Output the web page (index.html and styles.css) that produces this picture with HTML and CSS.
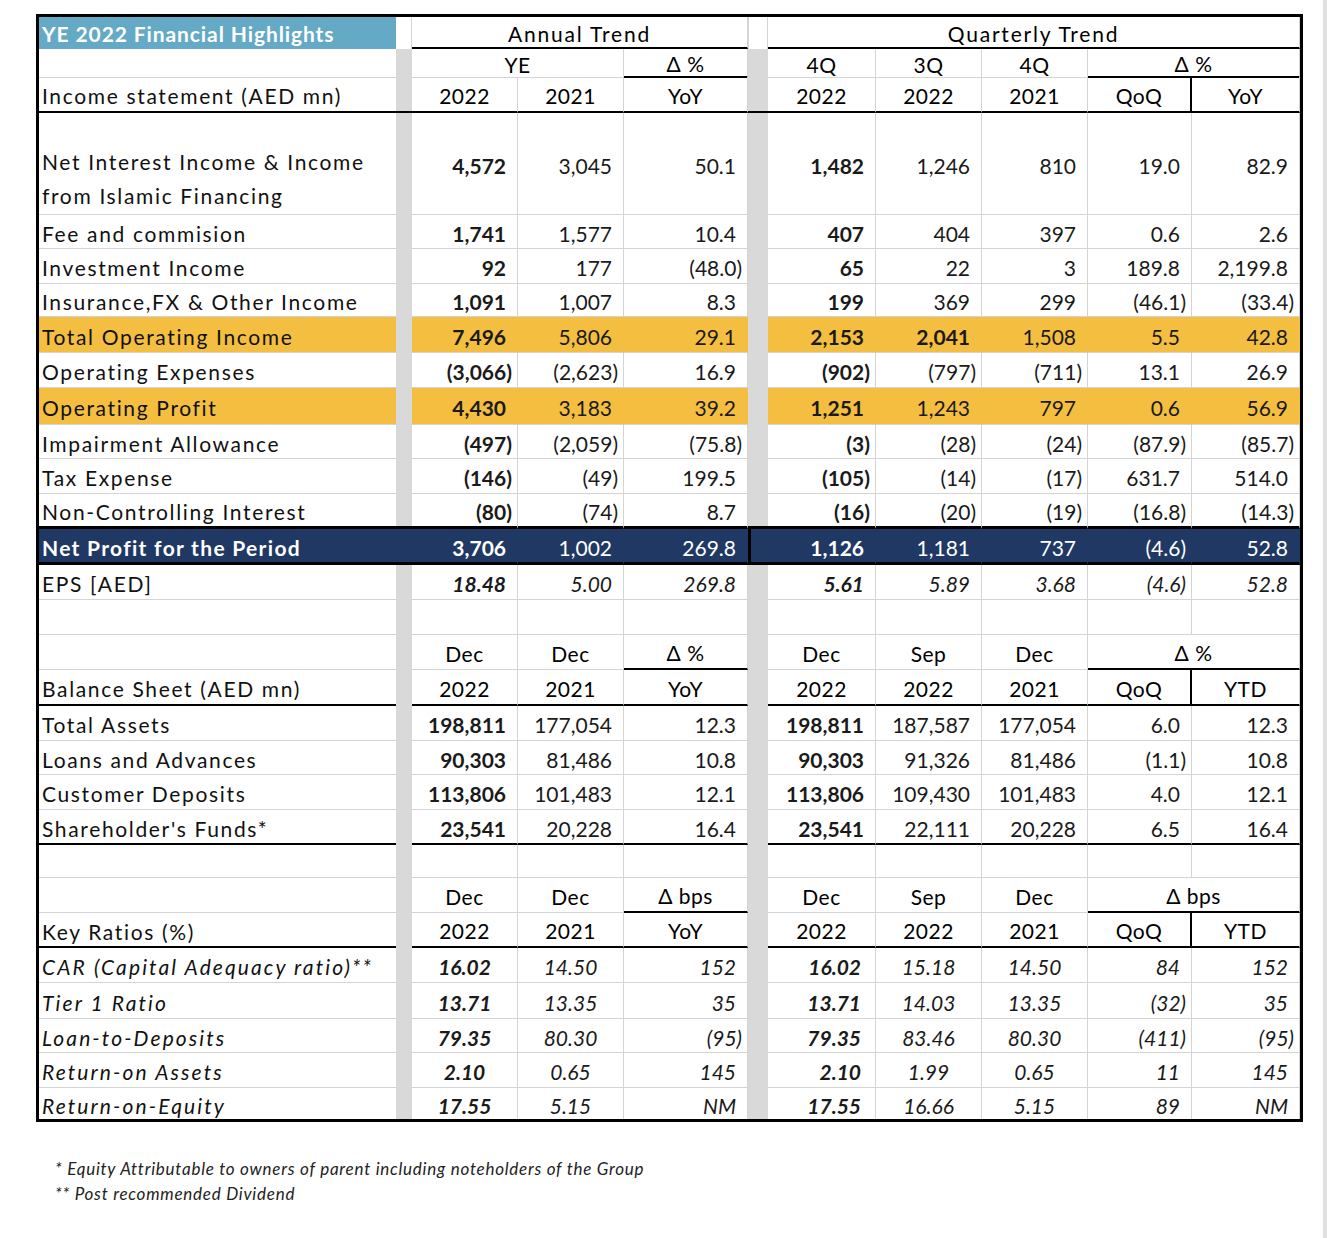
FILE: index.html
```html
<!DOCTYPE html>
<html lang="en">
<head>
<meta charset="utf-8">
<title>YE 2022 Financial Highlights</title>
<link rel="stylesheet" href="styles.css">
</head>
<body>
<div class="page">
  <div class="main">
    <div class="sheet">
      <!-- header -->
      <div class="row r32 top">
        <div class="title">YE 2022 Financial Highlights</div>
        <div class="s"></div>
        <div class="h sp3 bk trend">Annual Trend</div>
        <div class="s"></div>
        <div class="h sp5 bk trend">Quarterly Trend</div>
      </div>
      <div class="row r28">
        <div class="l"></div><div class="s"></div>
        <div class="h sp2">YE</div><div class="h bk">Δ %</div>
        <div class="s"></div>
        <div class="h">4Q</div><div class="h">3Q</div><div class="h">4Q</div><div class="h sp2 bk">Δ %</div>
      </div>
      <div class="row r36 rb all">
        <div class="l">Income statement (AED mn)</div><div class="s"></div>
        <div class="h">2022</div><div class="h">2021</div><div class="h">YoY</div><div class="s"></div>
        <div class="h">2022</div><div class="h">2022</div><div class="h">2021</div><div class="h br">QoQ</div><div class="h">YoY</div>
      </div>

      <!-- income statement -->
      <div class="row r102">
        <div class="l multi">Net Interest Income &amp; Income<br>from Islamic Financing</div><div class="s"></div>
        <div class="b">4,572</div><div>3,045</div><div>50.1</div><div class="s"></div>
        <div class="b">1,482</div><div>1,246</div><div>810</div><div>19.0</div><div>82.9</div>
      </div>
      <div class="row r34">
        <div class="l">Fee and commision</div><div class="s"></div>
        <div class="b">1,741</div><div>1,577</div><div>10.4</div><div class="s"></div>
        <div class="b">407</div><div>404</div><div>397</div><div>0.6</div><div>2.6</div>
      </div>
      <div class="row">
        <div class="l">Investment Income</div><div class="s"></div>
        <div class="b">92</div><div>177</div><div class="n">(48.0)</div><div class="s"></div>
        <div class="b">65</div><div>22</div><div>3</div><div>189.8</div><div>2,199.8</div>
      </div>
      <div class="row r33">
        <div class="l">Insurance,FX &amp; Other Income</div><div class="s"></div>
        <div class="b">1,091</div><div>1,007</div><div>8.3</div><div class="s"></div>
        <div class="b">199</div><div>369</div><div>299</div><div class="n">(46.1)</div><div class="n">(33.4)</div>
      </div>
      <div class="row r36 or">
        <div class="l">Total Operating Income</div><div class="s"></div>
        <div class="b">7,496</div><div>5,806</div><div>29.1</div><div class="s"></div>
        <div class="b">2,153</div><div class="b">2,041</div><div>1,508</div><div>5.5</div><div>42.8</div>
      </div>
      <div class="row">
        <div class="l">Operating Expenses</div><div class="s"></div>
        <div class="b n">(3,066)</div><div class="n">(2,623)</div><div>16.9</div><div class="s"></div>
        <div class="b n">(902)</div><div class="n">(797)</div><div class="n">(711)</div><div>13.1</div><div>26.9</div>
      </div>
      <div class="row r37 or">
        <div class="l">Operating Profit</div><div class="s"></div>
        <div class="b">4,430</div><div>3,183</div><div>39.2</div><div class="s"></div>
        <div class="b">1,251</div><div>1,243</div><div>797</div><div>0.6</div><div>56.9</div>
      </div>
      <div class="row r34">
        <div class="l">Impairment Allowance</div><div class="s"></div>
        <div class="b n">(497)</div><div class="n">(2,059)</div><div class="n">(75.8)</div><div class="s"></div>
        <div class="b n">(3)</div><div class="n">(28)</div><div class="n">(24)</div><div class="n">(87.9)</div><div class="n">(85.7)</div>
      </div>
      <div class="row">
        <div class="l">Tax Expense</div><div class="s"></div>
        <div class="b n">(146)</div><div class="n">(49)</div><div>199.5</div><div class="s"></div>
        <div class="b n">(105)</div><div class="n">(14)</div><div class="n">(17)</div><div>631.7</div><div>514.0</div>
      </div>
      <div class="row rb3">
        <div class="l">Non-Controlling Interest</div><div class="s"></div>
        <div class="b n">(80)</div><div class="n">(74)</div><div>8.7</div><div class="s"></div>
        <div class="b n">(16)</div><div class="n">(20)</div><div class="n">(19)</div><div class="n">(16.8)</div><div class="n">(14.3)</div>
      </div>
      <div class="row r36 rb3 nv">
        <div class="l b">Net Profit for the Period</div><div class="s"></div>
        <div class="b">3,706</div><div>1,002</div><div>269.8</div><div class="s vline"></div>
        <div class="b">1,126</div><div>1,181</div><div>737</div><div class="n">(4.6)</div><div>52.8</div>
      </div>
      <div class="row it">
        <div class="l up">EPS [AED]</div><div class="s"></div>
        <div class="b">18.48</div><div>5.00</div><div>269.8</div><div class="s"></div>
        <div class="b">5.61</div><div>5.89</div><div>3.68</div><div class="n">(4.6)</div><div>52.8</div>
      </div>
      <div class="row">
        <div class="l"></div><div class="s"></div>
        <div></div><div></div><div></div><div class="s"></div>
        <div></div><div></div><div></div><div></div><div></div>
      </div>

      <!-- balance sheet -->
      <div class="row">
        <div class="l"></div><div class="s"></div>
        <div class="h">Dec</div><div class="h">Dec</div><div class="h bk">Δ %</div><div class="s"></div>
        <div class="h">Dec</div><div class="h">Sep</div><div class="h">Dec</div><div class="h sp2 bk">Δ %</div>
      </div>
      <div class="row r36 rb">
        <div class="l">Balance Sheet (AED mn)</div><div class="s"></div>
        <div class="h">2022</div><div class="h">2021</div><div class="h">YoY</div><div class="s"></div>
        <div class="h">2022</div><div class="h">2022</div><div class="h">2021</div><div class="h br">QoQ</div><div class="h">YTD</div>
      </div>
      <div class="row">
        <div class="l">Total Assets</div><div class="s"></div>
        <div class="b">198,811</div><div>177,054</div><div>12.3</div><div class="s"></div>
        <div class="b">198,811</div><div>187,587</div><div>177,054</div><div>6.0</div><div>12.3</div>
      </div>
      <div class="row r34">
        <div class="l">Loans and Advances</div><div class="s"></div>
        <div class="b">90,303</div><div>81,486</div><div>10.8</div><div class="s"></div>
        <div class="b">90,303</div><div>91,326</div><div>81,486</div><div class="n">(1.1)</div><div>10.8</div>
      </div>
      <div class="row">
        <div class="l">Customer Deposits</div><div class="s"></div>
        <div class="b">113,806</div><div>101,483</div><div>12.1</div><div class="s"></div>
        <div class="b">113,806</div><div>109,430</div><div>101,483</div><div>4.0</div><div>12.1</div>
      </div>
      <div class="row rb">
        <div class="l">Shareholder's Funds*</div><div class="s"></div>
        <div class="b">23,541</div><div>20,228</div><div>16.4</div><div class="s"></div>
        <div class="b">23,541</div><div>22,111</div><div>20,228</div><div>6.5</div><div>16.4</div>
      </div>
      <div class="row r33">
        <div class="l"></div><div class="s"></div>
        <div></div><div></div><div></div><div class="s"></div>
        <div></div><div></div><div></div><div></div><div></div>
      </div>

      <!-- key ratios -->
      <div class="row">
        <div class="l"></div><div class="s"></div>
        <div class="h">Dec</div><div class="h">Dec</div><div class="h bk">Δ bps</div><div class="s"></div>
        <div class="h">Dec</div><div class="h">Sep</div><div class="h">Dec</div><div class="h sp2 bk">Δ bps</div>
      </div>
      <div class="row rb">
        <div class="l">Key Ratios (%)</div><div class="s"></div>
        <div class="h">2022</div><div class="h">2021</div><div class="h">YoY</div><div class="s"></div>
        <div class="h">2022</div><div class="h">2022</div><div class="h">2021</div><div class="h br">QoQ</div><div class="h">YTD</div>
      </div>
      <div class="row it kr">
        <div class="l">CAR (Capital Adequacy ratio)**</div><div class="s"></div>
        <div class="b ctr">16.02</div><div class="ctr">14.50</div><div>152</div><div class="s"></div>
        <div class="b q1">16.02</div><div class="ctr">15.18</div><div class="ctr">14.50</div><div>84</div><div>152</div>
      </div>
      <div class="row r36 it kr">
        <div class="l">Tier 1 Ratio</div><div class="s"></div>
        <div class="b ctr">13.71</div><div class="ctr">13.35</div><div>35</div><div class="s"></div>
        <div class="b q1">13.71</div><div class="ctr">14.03</div><div class="ctr">13.35</div><div class="n">(32)</div><div>35</div>
      </div>
      <div class="row r34 it kr">
        <div class="l">Loan-to-Deposits</div><div class="s"></div>
        <div class="b ctr">79.35</div><div class="ctr">80.30</div><div class="n">(95)</div><div class="s"></div>
        <div class="b q1">79.35</div><div class="ctr">83.46</div><div class="ctr">80.30</div><div class="n">(411)</div><div class="n">(95)</div>
      </div>
      <div class="row it kr">
        <div class="l">Return-on Assets</div><div class="s"></div>
        <div class="b ctr">2.10</div><div class="ctr">0.65</div><div>145</div><div class="s"></div>
        <div class="b q1">2.10</div><div class="ctr">1.99</div><div class="ctr">0.65</div><div>11</div><div>145</div>
      </div>
      <div class="row r31 it kr last">
        <div class="l">Return-on-Equity</div><div class="s"></div>
        <div class="b ctr">17.55</div><div class="ctr">5.15</div><div>NM</div><div class="s"></div>
        <div class="b q1">17.55</div><div class="ctr">16.66</div><div class="ctr">5.15</div><div>89</div><div>NM</div>
      </div>
    </div>

    <div class="notes">
      <p>* Equity Attributable to owners of parent including noteholders of the Group</p>
      <p>** Post recommended Dividend</p>
    </div>
  </div>
  <div class="edge"></div>
</div>
</body>
</html>
```

FILE: styles.css
```css
* { box-sizing: border-box; }

body {
  margin: 0;
  background: #fff;
  font-family: Lato, "Noto Sans", "DejaVu Sans", sans-serif;
  color: #1a1a1a;
}

.page {
  width: 1330px;
  height: 1238px;
  display: flex;
}

.main {
  width: 1323px;
  padding: 14px 0 0 36px;
}

.edge {
  width: 4px;
  background: #e1e1e1;
}

.sheet {
  width: 1267px;
  border: 3px solid #000;
}

.row {
  display: grid;
  grid-template-columns: 357px 16px 106px 106px 124px 20px 108px 106px 106px 104px 108px;
  height: 35px;
  font-size: 21px;
}

.r28 { height: 28px; }
.r31 { height: 31px; }
.r32 { height: 32px; }
.r33 { height: 33px; }
.r34 { height: 34px; }
.r36 { height: 36px; }
.r37 { height: 37px; }
.r102 { height: 102px; }

.row > div {
  display: flex;
  align-items: center;
  justify-content: flex-end;
  padding: 3px 11px 0 0;
  border-bottom: 1px solid #d4d4d4;
  border-right: 1px solid #d4d4d4;
  white-space: nowrap;
}

.row > .l {
  justify-content: flex-start;
  padding: 3px 0 0 3px;
  border-right: none;
  letter-spacing: 1.65px;
  color: #111;
}

.it > .l { letter-spacing: 2.1px; }
.it > .up { letter-spacing: 1.65px; }

.row > .multi {
  align-items: flex-end;
  line-height: 34px;
  padding: 0 0 1px 3px;
}

.row > .s {
  background: #d9d9d9;
  border: none;
  padding: 0;
}

.row > .h {
  justify-content: center;
  padding: 2px 0 0 0;
  color: #000;
  letter-spacing: 0.5px;
}

.row > .trend { letter-spacing: 1.8px; }

.row > .title {
  background: #64a9c5;
  color: #fff;
  font-weight: 700;
  justify-content: flex-start;
  padding: 0 0 0 3px;
  border: none;
  letter-spacing: 0.9px;
}

.top > .s {
  background: #fff;
  border-right: 1px solid #d4d4d4;
}

.top > .s:nth-child(4) { border-left: 1px solid #d4d4d4; }

.sp2 { grid-column: span 2; }
.sp3 { grid-column: span 3; }
.sp5 { grid-column: span 5; }

.row > .bk { border-bottom: 2px solid #000; }
.row > .br { border-right: 2px solid #000; }

.rb > div { border-bottom: 2px solid #000; }
.rb > .s { border-bottom: none; }
.rb.all > .s { border-bottom: 2px solid #000; }

.rb3 > div,
.rb3 > .s { border-bottom: 3px solid #000; }

.b { font-weight: 700; }
.row > .n { padding-right: 5px; }
.row > .ctr { justify-content: center; padding-right: 0; }
.row > .q1 { padding-right: 14px; }

.it > div { font-style: italic; }
.it > .up { font-style: normal; }

.or > div { background: #f4be41; border-right-color: #f4be41; }
.or > .s { background: #d9d9d9; }

.nv > div,
.nv > .s {
  background: #1f3864;
  color: #fff;
  border-right-color: #1f3864;
}
.row.nv > .l { color: #fff; letter-spacing: 1.3px; }
.nv > .vline { border-left: 3px solid #000; }

.last > div { border-bottom: none; }

.notes {
  margin-top: 34px;
  padding-left: 19px;
  font-size: 17px;
  font-style: italic;
  color: #222;
}

.notes p {
  margin: 0;
  line-height: 25px;
  letter-spacing: 0.75px;
}
```
